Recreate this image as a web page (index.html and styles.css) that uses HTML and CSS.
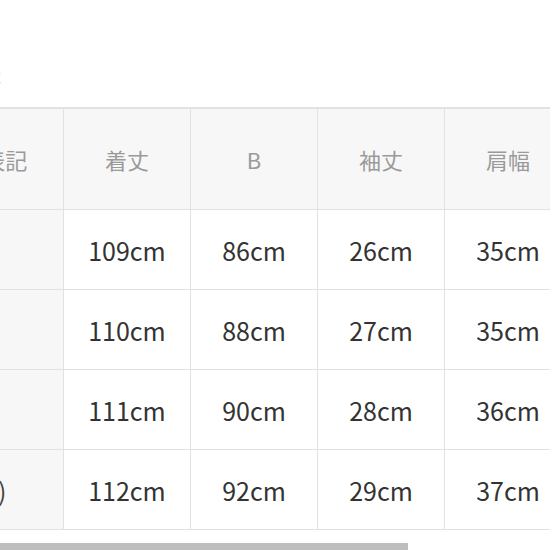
FILE: index.html
```html
<!DOCTYPE html>
<html lang="ja">
<head>
<meta charset="utf-8">
<link rel="stylesheet" href="styles.css">
</head>
<body>
<div class="page">
  <div class="title">サイズ表</div>
  <table class="size-table">
    <colgroup>
      <col class="c-label">
      <col class="c-val">
      <col class="c-val">
      <col class="c-val">
      <col class="c-val">
    </colgroup>
    <thead>
      <tr>
        <th class="label">サイズ表記</th>
        <th>着丈</th>
        <th>B</th>
        <th>袖丈</th>
        <th>肩幅</th>
      </tr>
    </thead>
    <tbody>
      <tr><td class="label">S</td><td>109cm</td><td>86cm</td><td>26cm</td><td>35cm</td></tr>
      <tr><td class="label">M(9)</td><td>110cm</td><td>88cm</td><td>27cm</td><td>35cm</td></tr>
      <tr><td class="label">L(11)</td><td>111cm</td><td>90cm</td><td>28cm</td><td>36cm</td></tr>
      <tr><td class="label">XL(LL)</td><td>112cm</td><td>92cm</td><td>29cm</td><td>37cm</td></tr>
    </tbody>
  </table>
  <div class="scrollbar"></div>
</div>
</body>
</html>
```
FILE: styles.css
```css
html, body {
  margin: 0;
  padding: 0;
  background: #ffffff;
  overflow: hidden;
}
.page {
  width: 550px;
  height: 550px;
  overflow: hidden;
  font-family: "Noto Sans CJK JP", "Noto Sans", sans-serif;
}
.title {
  height: 107px;
  box-sizing: border-box;
  padding-top: 62px;
  margin-left: -78px;
  font-size: 20px;
  line-height: 24px;
  color: #d0d0d0;
  white-space: nowrap;
}
.size-table {
  margin-left: -107px;
  border-collapse: collapse;
  table-layout: fixed;
  width: 678px;
  border-top: 2px solid #e2e2e2;
}
.c-label { width: 170px; }
.c-val { width: 127px; }
.size-table th,
.size-table td {
  border: 1px solid #e2e2e2;
  text-align: center;
  padding: 0;
  white-space: nowrap;
}
.size-table th {
  height: 100px;
  background: #f7f7f7;
  font-weight: 400;
  font-size: 22px;
  color: #9a9a9a;
}
.size-table th.label {
  padding-right: 12px;
}
.size-table td {
  height: 79px;
  font-size: 25px;
  color: #333333;
  background: #ffffff;
}
.size-table td.label {
  background: #f7f7f7;
  color: #444444;
  padding-right: 16px;
}
.scrollbar {
  margin-top: 13px;
  width: 408px;
  height: 8px;
  background: #bdbdbd;
}
```
